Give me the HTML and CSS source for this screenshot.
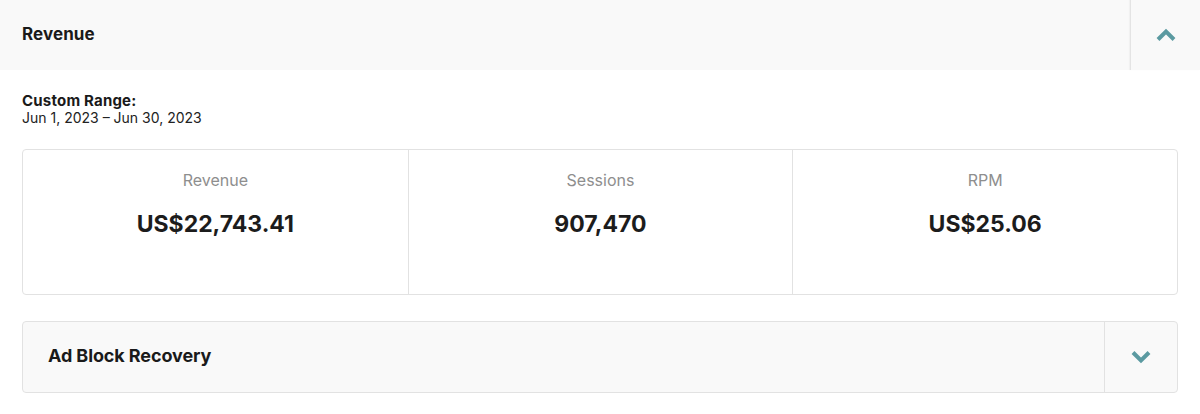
FILE: index.html
```html
<!DOCTYPE html>
<html>
<head>
<meta charset="utf-8">
<link rel="stylesheet" href="styles.css">
</head>
<body>
<div class="panel-head">
  <div class="panel-title">Revenue</div>
  <button class="toggle toggle-top" aria-label="Collapse">
    <svg width="22" height="14" viewBox="0 0 22 14"><path d="M3 11.5 L11 3.5 L19 11.5" fill="none" stroke="#5b9aa1" stroke-width="4" stroke-linecap="butt" stroke-linejoin="miter"/></svg>
  </button>
</div>
<div class="content">
  <div class="range">
    <div class="range-label">Custom Range:</div>
    <div class="range-dates">Jun 1, 2023 – Jun 30, 2023</div>
  </div>
  <div class="stats">
    <div class="stat">
      <div class="stat-label">Revenue</div>
      <div class="stat-value">US$22,743.41</div>
    </div>
    <div class="stat">
      <div class="stat-label">Sessions</div>
      <div class="stat-value">907,470</div>
    </div>
    <div class="stat">
      <div class="stat-label">RPM</div>
      <div class="stat-value">US$25.06</div>
    </div>
  </div>
  <div class="box">
    <div class="box-title">Ad Block Recovery</div>
    <button class="toggle toggle-box" aria-label="Expand">
      <svg width="22" height="14" viewBox="0 0 22 14"><path d="M3 2.5 L11 10.5 L19 2.5" fill="none" stroke="#5b9aa1" stroke-width="4" stroke-linecap="butt" stroke-linejoin="miter"/></svg>
    </button>
  </div>
</div>
</body>
</html>
```
FILE: styles.css
```css
html, body {
  margin: 0;
  padding: 0;
  background: #ffffff;
  font-family: Inter, "Noto Sans", sans-serif;
  color: #1a1a1a;
}
.panel-head {
  height: 70px;
  background: #f9f9f9;
  display: flex;
  align-items: center;
  justify-content: space-between;
  padding-left: 22px;
}
.panel-title {
  font-size: 17px;
  font-weight: 700;
  letter-spacing: 0.1px;
  padding-bottom: 2px;
}
.toggle {
  border: none;
  background: transparent;
  padding: 0;
  margin: 0;
  display: flex;
  align-items: center;
  justify-content: center;
  cursor: pointer;
}
.toggle-top {
  width: 70px;
  height: 70px;
  border-left: 1px solid #e4e4e4;
  box-shadow: -1px 0 1px rgba(0,0,0,0.03);
}
.content {
  padding: 22px 22px 0;
}
.range {
  line-height: 17px;
}
.range-label {
  font-size: 15px;
  font-weight: 700;
  letter-spacing: 0.2px;
}
.range-dates {
  font-size: 14px;
  font-weight: 400;
  color: #222;
}
.stats {
  margin-top: 23px;
  height: 144px;
  border: 1px solid #e2e2e2;
  border-radius: 4px;
  display: grid;
  grid-template-columns: 1fr 1fr 1fr;
}
.stat {
  display: flex;
  flex-direction: column;
  align-items: center;
  padding-top: 20px;
}
.stat + .stat {
  border-left: 1px solid #e2e2e2;
}
.stat-label {
  font-size: 16px;
  line-height: 20px;
  color: #8e8e8e;
}
.stat-value {
  margin-top: 19px;
  font-size: 23px;
  line-height: 30px;
  font-weight: 700;
  color: #1c1c1c;
}
.box {
  margin-top: 26px;
  height: 70px;
  border: 1px solid #e2e2e2;
  border-radius: 4px;
  background: #f9f9f9;
  display: flex;
  align-items: center;
  justify-content: space-between;
  padding-left: 25px;
}
.box-title {
  font-size: 18px;
  font-weight: 700;
  letter-spacing: -0.1px;
  padding-bottom: 3px;
}
.toggle-box {
  width: 73px;
  height: 70px;
  border-left: 1px solid #e2e2e2;
  border-radius: 0 4px 4px 0;
}
```
